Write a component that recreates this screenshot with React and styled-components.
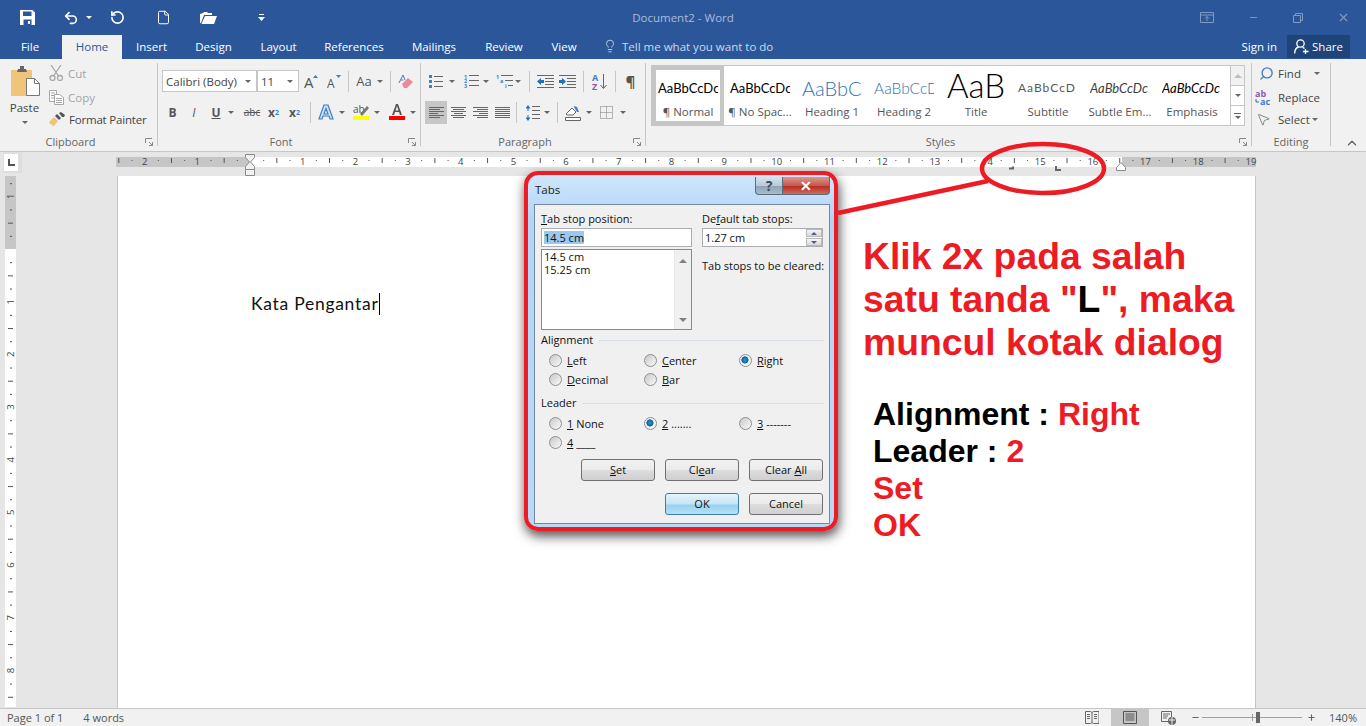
import React from 'react';
import styled, { createGlobalStyle } from 'styled-components';
import { Undo2, RotateCcw, File, Lightbulb, Search, MousePointer2, ChevronUp, Minus, X, Plus } from 'lucide-react';

const UI = '"Open Sans", "Noto Sans", sans-serif';
const RED = '#ed1c24';

const Global = createGlobalStyle`
	html, body { margin: 0; height: 100%; overflow: hidden; }
	#root { height: 726px; }
	* { box-sizing: border-box; }
	body { font-family: ${UI}; color: #444; }
`;

const Screen = styled.div`
	position: relative;
	width: 1366px;
	height: 726px;
	display: flex;
	flex-direction: column;
	overflow: hidden;
	background: #e6e6e6;
`;

/* title bar */
const TitleBar = styled.div`
	height: 35px;
	background: #2b579a;
	display: flex;
	align-items: center;
	color: #fff;
	padding-left: 20px;
`;
const QatSlot = styled.div`
	width: ${p => p.$w}px;
	display: flex;
	align-items: center;
`;
const DocTitle = styled.div`
	flex: 1;
	text-align: center;
	font-size: 11.5px;
	color: #a9bcd9;
	margin-left: -104px;
`;
const WinButtons = styled.div`
	display: flex;
	align-items: center;
	gap: 34px;
	padding-right: 16px;
	color: #7f9ac3;
`;

/* tabs */
const TabRow = styled.div`
	height: 24px;
	background: #2b579a;
	display: flex;
	align-items: stretch;
	padding-left: 7px;
	font-size: 11.5px;
	color: #fff;
`;
const Tab = styled.div`
	width: ${p => p.$w}px;
	display: flex;
	align-items: center;
	justify-content: center;
	padding: 0 ${p => p.$pr || 0}px 2px 0;
	background: ${p => (p.$active ? '#f1f1f1' : 'transparent')};
	color: ${p => (p.$active ? '#2b579a' : '#fff')};
`;
const TellMe = styled.div`
	display: flex;
	align-items: center;
	gap: 5px;
	margin-left: 12px;
	padding-bottom: 2px;
	color: #cdd9ea;
	flex: 1;
`;
const SignIn = styled.div`
	display: flex;
	align-items: center;
	margin-right: 10px;
	padding-bottom: 2px;
`;
const Share = styled.div`
	width: 63px;
	height: 23px;
	margin-right: 16px;
	padding-bottom: 1px;
	background: #1e4479;
	display: flex;
	align-items: center;
	justify-content: center;
	gap: 3px;
`;

/* ribbon */
const Ribbon = styled.div`
	height: 93px;
	background: #f1f1f1;
	border-bottom: 1px solid #c6c6c6;
	display: flex;
	font-size: 11.5px;
	color: #444;
`;
const Group = styled.div`
	width: ${p => p.$w}px;
	margin: 4px 0 5px;
	border-right: 1px solid #c6c6c6;
	display: flex;
	flex-direction: column;
`;
const GroupBody = styled.div`
	flex: 1;
	display: flex;
	padding-left: ${p => p.$pl || 0}px;
	min-height: 0;
`;
const GroupFoot = styled.div`
	height: 8px;
	display: grid;
	grid-template-columns: 1fr auto;
	align-items: center;
	line-height: 8px;
	text-align: center;
	font-size: 11px;
	color: #666;
`;
const Launcher = styled.svg`
	width: 8px;
	height: 8px;
	margin: 0 4px;
`;
const PasteBlock = styled.div`
	width: 49px;
	display: flex;
	flex-direction: column;
	align-items: center;
	padding-top: 3px;
	font-size: 11.5px;
`;
const PasteArt = styled.div`
	margin-left: 3px;
	height: 32px;
`;
const PasteLabel = styled.div`
	margin-top: 2px;
`;
const ClipList = styled.div`
	display: flex;
	flex-direction: column;
	margin-top: -2px;
`;
const ClipRow = styled.div`
	height: ${p => p.$h || 24}px;
	display: flex;
	align-items: center;
	gap: 4px;
	white-space: nowrap;
	letter-spacing: ${p => p.$ls || 0}px;
	color: ${p => (p.$dim ? '#a3a3a3' : '#444')};
`;
const Stack = styled.div`
	display: flex;
	flex-direction: column;
	padding-top: 7px;
	gap: ${p => p.$gap || 9}px;
`;
const Row = styled.div`
	height: ${p => p.$h || 22}px;
	display: flex;
	align-items: center;
`;
const Combo = styled.div`
	width: ${p => p.$w}px;
	height: 22px;
	background: #fff;
	border: 1px solid #c6c6c6;
	display: flex;
	align-items: center;
	justify-content: space-between;
	padding: 0 5px 0 3px;
	font-size: 11.5px;
`;
const Tool = styled.div`
	width: ${p => p.$w || 22}px;
	height: ${p => p.$h || 22}px;
	flex: none;
	display: flex;
	align-items: center;
	justify-content: center;
	background: ${p => (p.$on ? '#c6c6c6' : 'transparent')};
	font-size: ${p => p.$fs || 12}px;
	font-weight: ${p => (p.$bold ? 700 : 400)};
	font-style: ${p => (p.$italic ? 'italic' : 'normal')};
	text-decoration: ${p => p.$deco || 'none'};
	color: #555;
`;
const Sub = styled.sub`
	font-size: 7px;
	color: #3f7fc4;
`;
const Sup = styled.sup`
	font-size: 7px;
	color: #3f7fc4;
`;
const Gap = styled.span`
	width: ${p => p.$w}px;
	flex: none;
`;
const Sep = styled.div`
	width: 1px;
	height: 21px;
	flex: none;
	background: #c6c6c6;
	margin: 0 ${p => p.$mr ?? 6}px 0 ${p => p.$ml ?? 6}px;
`;
const Caret = styled.i`
	width: 0;
	height: 0;
	flex: none;
	border-left: 3px solid transparent;
	border-right: 3px solid transparent;
	border-top: 3px solid ${p => p.$c || '#666'};
	margin: ${p => p.$m || '0'};
`;
const Gallery = styled.div`
	margin: 2px 0 0 5px;
	width: 594px;
	height: 61px;
	background: #fff;
	border: 1px solid #c6c6c6;
	display: flex;
`;
const StyleItem = styled.div`
	width: 72px;
	flex: none;
	display: flex;
	flex-direction: column;
	align-items: center;
	justify-content: flex-end;
	border: ${p => (p.$on ? '4px solid #c6c6c6' : '4px solid transparent')};
	overflow: hidden;
`;
const Preview = styled.div`
	width: 60px;
	height: 32px;
	line-height: ${p => (p.$title ? 26 : 32)}px;
	overflow: hidden;
	white-space: nowrap;
	text-align: ${p => (p.$title ? 'center' : 'left')};
	font-family: Lato, "Liberation Sans", sans-serif;
	font-size: ${p => p.$fs || 13}px;
	font-weight: ${p => p.$fw || 400};
	font-style: ${p => (p.$italic ? 'italic' : 'normal')};
	letter-spacing: ${p => p.$ls || 0}px;
	color: ${p => p.$c || '#000'};
`;
const StyleName = styled.div`
	height: 17px;
	line-height: 16px;
	font-size: 11.5px;
	white-space: nowrap;
	color: #555;
`;
const GalleryScroll = styled.div`
	width: 14px;
	margin-left: auto;
	display: flex;
	flex-direction: column;
	border-left: 1px solid #c6c6c6;
`;
const ScrollCell = styled.div`
	flex: 1;
	display: flex;
	flex-direction: column;
	align-items: center;
	justify-content: center;
	gap: 2px;
	background: ${p => (p.$off ? '#f1f1f1' : '#fff')};
	border-bottom: ${p => (p.$end ? 'none' : '1px solid #c6c6c6')};
`;
const UpMark = styled.i`
	width: 0;
	height: 0;
	border-left: 4px solid transparent;
	border-right: 4px solid transparent;
	border-bottom: 4px solid #c0c0c0;
`;
const Bar = styled.i`
	width: 7px;
	height: 1px;
	background: #666;
`;
const EditList = styled.div`
	display: flex;
	flex-direction: column;
	margin-top: -2px;
`;
const EditRow = styled.div`
	height: ${p => p.$h || 24}px;
	display: flex;
	align-items: center;
`;
const EditIcon = styled.div`
	width: 26px;
	display: flex;
	justify-content: center;
	padding-left: ${p => p.$pl || 0}px;
	padding-right: ${p => p.$pr ?? 3}px;
`;
const Collapse = styled.div`
	flex: 1;
	display: flex;
	align-items: flex-end;
	justify-content: center;
	padding: 0 0 1px 6px;
	color: #666;
`;

/* ruler + document */
const RulerRow = styled.div`
	height: 24px;
	flex: none;
	display: flex;
	background: #e6e6e6;
`;
const SelectorWell = styled.div`
	width: 19px;
	height: 21px;
	margin: 0 94px 0 3px;
	background: #dedede;
	padding: 2px 4px 2px 1px;
`;
const TabSelector = styled.div`
	width: 14px;
	height: 17px;
	background: #fff;
	display: flex;
	align-items: center;
	justify-content: center;
`;
const WorkArea = styled.div`
	flex: 1;
	display: flex;
	min-height: 0;
`;
const Gutter = styled.div`
	width: 117px;
	flex: none;
	padding-left: 5px;
`;
const Page = styled.div`
	width: 1139px;
	flex: none;
	background: #fff;
	border-left: 1px solid #c6c6c6;
	border-right: 1px solid #c6c6c6;
	padding: 116px 0 0 133px;
`;
const BodyText = styled.div`
	font-family: Lato, "Liberation Sans", sans-serif;
	font-size: 17.5px;
	line-height: 24px;
	letter-spacing: 0.72px;
	color: #111;
	display: flex;
	align-items: center;
`;
const Cursor = styled.i`
	width: 1px;
	height: 22px;
	background: #000;
`;

/* status */
const StatusBar = styled.div`
	height: 18px;
	flex: none;
	background: #f1f1f1;
	border-top: 1px solid #c6c6c6;
	display: flex;
	align-items: center;
	font-size: 11px;
	color: #555;
	padding: 0 9px 0 7px;
	white-space: nowrap;
`;
const StatusText = styled.span`
	margin: ${p => p.$m || '0'};
`;
const StatusRight = styled.div`
	margin-left: auto;
	display: flex;
	align-items: center;
`;
const ViewButton = styled.div`
	width: ${p => p.$w}px;
	height: 17px;
	display: flex;
	align-items: center;
	justify-content: center;
	background: ${p => (p.$on ? '#c6c6c6' : 'transparent')};
`;
const ZoomEnd = styled.div`
	display: flex;
	margin: ${p => p.$m};
	color: #666;
`;
const Zoomer = styled.div`
	position: relative;
	width: 100px;
	height: 1px;
	background: #a0a0a0;
	margin: 0 5px 0 2px;
	display: flex;
	justify-content: center;
	align-items: center;
	&::before {
		content: '';
		position: absolute;
		left: 50px;
		top: -3px;
		width: 1px;
		height: 7px;
		background: #a0a0a0;
	}
`;
const ZoomThumb = styled.i`
	width: 4px;
	height: 11px;
	background: #666;
	flex: none;
	margin-left: 12px;
`;

/* Tabs dialog */
const Dialog = styled.div`
	position: absolute;
	left: 524px;
	top: 171px;
	width: 314px;
	height: 360px;
	border: 4px solid ${RED};
	border-radius: 14px;
	background: linear-gradient(180deg, #cfe6fb 0%, #b4d6f6 12%, #b9d9f7 100%);
	box-shadow: 1px 5px 12px rgba(0, 0, 0, 0.7);
	padding: 0 4px 3px 6px;
	display: flex;
	flex-direction: column;
	font-size: 11px;
	color: #111;
`;
const DialogHead = styled.div`
	height: 29px;
	flex: none;
	font-size: 11.5px;
	padding: 7px 0 0 1px;
	color: #1a1a1a;
`;
const Caption = styled.div`
	position: absolute;
	top: 2px;
	right: 4px;
	display: flex;
`;
const CapButton = styled.div`
	width: ${p => p.$w}px;
	height: 18px;
	display: flex;
	align-items: center;
	justify-content: center;
	border: 1px solid #5d6b7a;
	border-top: none;
	border-left: ${p => (p.$close ? 'none' : '1px solid #5d6b7a')};
	border-radius: ${p => (p.$close ? '0 0 4px 0' : '0 0 0 4px')};
	background: ${p => (p.$close
		? 'linear-gradient(180deg, #d9978e 0%, #c8574d 50%, #b92d21 55%, #cc6a5f 100%)'
		: 'linear-gradient(180deg, #d5e3f0 0%, #b8cadb 50%, #8fa4b8 55%, #a9bccd 100%)')};
	color: ${p => (p.$close ? '#fff' : '#3a4a5a')};
	font-size: 14px;
	font-weight: 700;
`;
const DialogPanel = styled.div`
	flex: 1;
	background: #f0f0f0;
	border: 1px solid #76899c;
	padding: 7px 6px 0 6px;
	display: flex;
	flex-direction: column;
`;
const TopGrid = styled.div`
	display: grid;
	grid-template-columns: 151px 121px;
	column-gap: 10px;
`;
const Col = styled.div`
	display: flex;
	flex-direction: column;
`;
const FieldLabel = styled.div`
	height: 14px;
	line-height: 14px;
	margin-bottom: 2px;
	white-space: nowrap;
`;
const Field = styled.div`
	height: 19px;
	background: #fff;
	border: 1px solid #abadb3;
	display: flex;
	align-items: center;
	padding-left: 2px;
	justify-content: space-between;
`;
const Selected = styled.span`
	background: #99c9ef;
	line-height: 13px;
`;
const Spin = styled.div`
	width: 16px;
	height: 17px;
	display: flex;
	flex-direction: column;
	gap: 1px;
`;
const SpinPart = styled.div`
	flex: 1;
	background: linear-gradient(180deg, #f5f5f5, #d9d9d9);
	border: 1px solid #b9b9b9;
	display: flex;
	align-items: center;
	justify-content: center;
`;
const SpinArrow = styled.i`
	width: 0;
	height: 0;
	border-left: 3px solid transparent;
	border-right: 3px solid transparent;
	${p => (p.$down ? 'border-top: 3px solid #4a5f8c;' : 'border-bottom: 3px solid #4a5f8c;')}
`;
const ListBox = styled.div`
	height: 81px;
	margin-top: 2px;
	background: #fff;
	border: 1px solid #8a8a8a;
	display: flex;
`;
const ListItems = styled.div`
	flex: 1;
	padding: 0 0 0 2px;
	line-height: 13px;
`;
const ListScroll = styled.div`
	width: 17px;
	background: #f0f0f0;
	border-left: 1px solid #e6e6e6;
	display: flex;
	flex-direction: column;
	justify-content: space-between;
	align-items: center;
	padding: 9px 0 7px;
`;
const ListArrow = styled.i`
	width: 0;
	height: 0;
	border-left: 4px solid transparent;
	border-right: 4px solid transparent;
	${p => (p.$down ? 'border-top: 4px solid #808080;' : 'border-bottom: 4px solid #808080;')}
`;
const Hint = styled.div`
	margin-top: 11px;
	white-space: nowrap;
`;
const SectionHead = styled.div`
	height: 14px;
	line-height: 14px;
	margin-top: ${p => p.$mt}px;
	display: flex;
	align-items: center;
	gap: 6px;
	width: 283px;
	&::after {
		content: '';
		flex: 1;
		height: 1px;
		background: #d6dfe8;
	}
`;
const RadioGrid = styled.div`
	display: grid;
	grid-template-columns: 95px 95px 90px;
	grid-auto-rows: 19px;
	padding-left: 8px;
	margin-top: 4px;
`;
const RadioCell = styled.div`
	display: flex;
	align-items: center;
	gap: 5px;
	white-space: nowrap;
	line-height: 17px;
	padding-bottom: 1px;
`;
const RadioDot = styled.i`
	width: 13px;
	height: 13px;
	flex: none;
	border-radius: 50%;
	border: 1px solid #8e8f8f;
	background: ${p => (p.$on
		? 'radial-gradient(circle at 45% 45%, #2f9bd8 0%, #0e5f96 38%, #f0f0f0 45%, #fff 100%)'
		: 'linear-gradient(135deg, #c8c8c8, #fafafa)')};
`;
const ButtonRow = styled.div`
	display: flex;
	justify-content: flex-end;
	gap: 10px;
	margin-top: ${p => p.$mt}px;
`;
const DlgButton = styled.div`
	width: 74px;
	height: 22px;
	display: flex;
	align-items: center;
	justify-content: center;
	padding-bottom: 1px;
	border-radius: 3px;
	border: 1px solid ${p => (p.$primary ? '#3c7fb1' : '#707070')};
	background: ${p => (p.$primary
		? 'linear-gradient(180deg, #e5f4fc 0%, #c4e5f6 50%, #98d1ef 55%, #b6e0f5 100%)'
		: 'linear-gradient(180deg, #f2f2f2 0%, #ebebeb 50%, #dddddd 52%, #cfcfcf 100%)')};
`;

/* annotation over the page */
const Callout = styled.svg`
	position: absolute;
	left: 0;
	top: 0;
	pointer-events: none;
`;
const Note = styled.div`
	position: absolute;
	left: ${p => p.$x}px;
	top: ${p => p.$y}px;
	font-family: "Liberation Sans", Arial, sans-serif;
	font-weight: 700;
	white-space: nowrap;
	font-size: ${p => p.$fs}px;
	line-height: ${p => p.$lh}px;
	color: ${RED};
`;
const Black = styled.span`
	color: #000;
`;
const U = styled.u`
	text-underline-offset: 1px;
`;

/* drawings */
const SaveIcon = () => (
	<svg width="15" height="15" viewBox="0 0 15 15"><path fillRule="evenodd" fill="#fff" d="M0 0h12.5L15 2.5V15H0zM3 1.5V6h8.5V1.5zM3.5 9.5V15h8V9.5zM8 11h2v3H8z" /></svg>
);
const OpenIcon = () => (
	<svg width="17" height="14" viewBox="0 0 17 14"><path fill="#fff" d="M0 3l3-1 1-1h3l1 1h4v2H4L1 12H0zM5 5h12l-3 8H1.500z" /></svg>
);
const QatMore = () => (
	<svg width="7" height="8" viewBox="0 0 7 8"><path fill="#fff" d="M1 0h5v1H1zM0 3h7L3.500 7z" /></svg>
);
const RibbonDisplay = () => (
	<svg width="14" height="11" viewBox="0 0 14 11" fill="none" stroke="currentColor"><path d="M.5.500h13v10H.5zM.5 3h13M7 9V4.500M5 6.500l2-2 2 2" /></svg>
);
const Restore = () => (
	<svg width="10" height="10" viewBox="0 0 10 10" fill="none" stroke="currentColor"><path d="M.5 2.500h7v7h-7zM2.500 2.500v-2h7v7h-2" /></svg>
);
const ShareIcon = () => (
	<svg width="15" height="15" viewBox="0 0 15 15" fill="none" stroke="#fff" strokeWidth="1.300"><circle cx="6.500" cy="4.500" r="3.700" /><path d="M.7 14.500c0-3.500 2-6 4-6.500M8.500 8.300c.8.200 1.500.6 2 1.200M11.500 10v5M9 12.500h5.500" /></svg>
);
const PasteIcon = () => (
	<svg width="30" height="32" viewBox="0 0 30 32">
		<path fill="#eec579" d="M0 4h21v26H0z" />
		<path fill="#666" d="M7 3h2V0h4v3h2l1 3H6z" />
		<path fill="#fff" stroke="#777" d="M15.500 12.500h8l5 5v12h-13z" />
		<path fill="none" stroke="#777" d="M23.500 12.500v5h5" />
	</svg>
);
const CutIcon = () => (
	<svg width="15" height="16" viewBox="0 0 15 16" fill="none" stroke="#a8a8a8" strokeWidth="1.300"><path d="M2 0l7.500 11M12 0L4.500 11" /><circle cx="3.500" cy="13" r="2.500" /><circle cx="11" cy="13" r="2.500" /></svg>
);
const CopyIcon = () => (
	<svg width="15" height="15" viewBox="0 0 15 15" fill="#fff" stroke="#a8a8a8"><path d="M.5.500h7v11h-7zM2 3h4M2 5.500h4M2 8h4" /><path d="M5.500 4.500h5l4 3v7h-9zM7 8.500h6M7 10.500h6M7 12.500h6" /></svg>
);
const PainterIcon = () => (
	<svg width="16" height="14" viewBox="0 0 16 14"><path fill="#eec579" d="M0 10l5-5 4 4-4 5H3l1-2-2 1z" /><path fill="#555" d="M6 4l4 4 2-2-4-4zM10 1l2-1 4 3-1 2-2 0z" /></svg>
);
const GrowFont = ({ down }) => (
	<svg width="14" height="15" viewBox="0 0 14 15">
		<text x="0" y="14" fontSize={down ? 12 : 15} fontFamily="Open Sans" fill="#555">A</text>
		<path fill="#3f7fc4" d={down ? 'M9 1h5l-2.500 3z' : 'M9 4h5l-2.500-3z'} />
	</svg>
);
const Eraser = () => (
	<svg width="16" height="15" viewBox="0 0 16 15">
		<path fill="#e98a9a" d="M4 10l6-6 5 4-6 6H6z" />
		<path fill="none" stroke="#3f7fc4" d="M1 9L5 1l2 5" />
		<path fill="none" stroke="#b4648c" d="M2.500 6h3" />
	</svg>
);
const TextEffect = () => (
	<svg width="16" height="16" viewBox="0 0 16 16"><path fill="#cfe2f5" stroke="#3f7fc4" strokeWidth="1.200" d="M6 1h4l5 14h-3l-1-3H5l-1 3H1zM8 4.500L6 10h4z" /></svg>
);
const Highlight = () => (
	<svg width="16" height="16" viewBox="0 0 16 16">
		<text x="0" y="9" fontSize="10" fontFamily="Open Sans" fill="#555">ab</text>
		<path fill="#777" d="M7 10l7-8 2 2-7 8z" />
		<path fill="#ffff00" d="M0 12h16v4H0z" />
	</svg>
);
const FontColor = () => (
	<svg width="16" height="16" viewBox="0 0 16 16">
		<path fill="#555" d="M7 0h2l4 11h-2l-1-3H6l-1 3H3zM8 2L6.500 6.500h3z" />
		<path fill="#f00" d="M0 12h16v4H0z" />
	</svg>
);
const BulletIcon = () => (
	<svg width="14" height="13" viewBox="0 0 14 13"><path fill="#3f7fc4" d="M0 0h3v3H0zM0 5h3v3H0zM0 10h3v3H0z" /><path fill="#666" d="M5 1h9v1H5zM5 6h9v1H5zM5 11h9v1H5z" /></svg>
);
const NumberIcon = () => (
	<svg width="15" height="14" viewBox="0 0 15 14"><text fontSize="5.500" fontWeight="700" fontFamily="Open Sans" fill="#3f7fc4"><tspan x="0" y="4.500">1</tspan><tspan x="0" y="9">2</tspan><tspan x="0" y="13.500">3</tspan></text><path fill="#666" d="M5 1h10v1H5zM5 6h10v1H5zM5 11h10v1H5z" /></svg>
);
const MultiIcon = () => (
	<svg width="17" height="14" viewBox="0 0 17 14"><text fontSize="5.500" fontWeight="700" fontFamily="Open Sans" fill="#3f7fc4"><tspan x="0" y="4.500">1</tspan><tspan x="4" y="9">a</tspan><tspan x="9" y="13.500">i</tspan></text><path fill="#666" d="M5 1h12v1H5zM9 6h8v1H9zM12 11h5v1h-5z" /></svg>
);
const IndentIcon = ({ more }) => (
	<svg width="17" height="13" viewBox="0 0 17 13"><path fill="#666" d="M0 0h17v1H0zM8 3h9v1H8zM8 6h9v1H8zM8 9h9v1H8zM0 12h17v1H0z" /><path fill="#1f6fbf" d={more ? 'M0 5h3V3l4 3.500L3 10V8H0z' : 'M7 5H4V3L0 6.500 4 10V8h3z'} /></svg>
);
const SortIcon = () => (
	<svg width="15" height="17" viewBox="0 0 15 17">
		<text x="0" y="8" fontSize="9" fontWeight="700" fontFamily="Open Sans" fill="#3f7fc4">A</text>
		<text x="0" y="16.500" fontSize="9" fontWeight="700" fontFamily="Open Sans" fill="#8d5bb0">Z</text>
		<path fill="none" stroke="#666" d="M11.500 1v14M8.500 12l3 3.500 3-3.500" />
	</svg>
);
const AlignIcon = ({ rows }) => (
	<svg width="15" height="11" viewBox="0 0 15 11">
		{rows.map((r, i) => <rect key={i} x={r[0]} y={i * 2} width={r[1]} height="1" fill="#666" />)}
	</svg>
);
const SpacingIcon = () => (
	<svg width="14" height="16" viewBox="0 0 14 16"><path fill="#1f6fbf" d="M2 0l2.500 3.500h-2V6h-1V3.500h-2zM1.500 10h1v2.500h2L2 16l-2.500-3.500h2z" /><path fill="#666" d="M6 1h8v1H6zM6 5h8v1H6zM6 9h8v1H6zM6 13h8v1H6z" /></svg>
);
const ShadingIcon = () => (
	<svg width="16" height="16" viewBox="0 0 16 16"><path fill="#fff" stroke="#666" d="M1 9l6-6 4 4-3 3H2zM.5 12.500h15v3H.5z" /><path fill="#3f7fc4" d="M9 1l3 1 2 5-2 0-3-5z" /></svg>
);
const BordersIcon = () => (
	<svg width="13" height="13" viewBox="0 0 13 13" fill="none" stroke="#777" strokeDasharray="1 1"><path d="M.5.500h12v12H.5zM6.500.5v12M.5 6.500h12" /></svg>
);
const ReplaceIcon = () => (
	<svg width="17" height="17" viewBox="0 0 17 17">
		<text x="0" y="7.500" fontSize="9" fontWeight="700" fontFamily="Open Sans" fill="#8d5bb0">ab</text>
		<text x="5" y="16" fontSize="9" fontWeight="700" fontFamily="Open Sans" fill="#3f7fc4">ac</text>
		<path fill="none" stroke="#1f6fbf" d="M1 10v3h3" />
	</svg>
);
const ReadIcon = () => (
	<svg width="14" height="13" viewBox="0 0 14 13" fill="none" stroke="#666"><path d="M.5.500h5l1.500 1 1.500-1h5.500v12h-5.500l-1.500-1-1.500 1h-5zM7 1.500v10M2 3.500h3M2 5.500h3M2 7.500h3M9 3.500h3M9 5.500h3M9 7.500h3" /></svg>
);
const PrintIcon = () => (
	<svg width="14" height="13" viewBox="0 0 14 13" fill="none" stroke="#555"><path d="M.5.500h13v12H.5zM2.500 3h9M2.500 5h9M2.500 7h9M2.500 9h9" /></svg>
);
const WebIcon = () => (
	<svg width="15" height="14" viewBox="0 0 15 14"><path fill="none" stroke="#666" d="M.5.500h10v10H.5zM2 3h7M2 5h5M2 7h4" /><circle cx="11" cy="10" r="4" fill="#666" /><path stroke="#f1f1f1" fill="none" d="M8 9h6M11 6v8" /></svg>
);

const rulerQuarter = 13.17;

// horizontal ruler, x = 0 is the left end of the drawing (screen x 116)
const HorizontalRuler = () => {
	const zero = 134;
	const marks = [];
	for (let q = -10; q <= 76; q++) {
		if (q === 0) continue;
		const x = zero + q * rulerQuarter;
		if (q % 4 === 0) {
			marks.push(<text key={q} x={x} y="12.500" fontSize="9.500" textAnchor="middle" fontFamily={UI} fill="#444">{Math.abs(q / 4)}</text>);
		} else if (q % 2 === 0) {
			marks.push(<rect key={q} x={x} y="6" width="1" height="5" fill="#555" />);
		} else {
			marks.push(<rect key={q} x={x} y="8" width="1" height="1" fill="#555" />);
		}
	}
	return (
		<svg width="1150" height="24" viewBox="0 0 1150 24">
			<rect x="0" y="5" width="134" height="10" fill="#c6c6c6" />
			<rect x="134" y="5" width="872" height="10" fill="#fff" />
			<rect x="1006" y="5" width="134" height="10" fill="#c6c6c6" />
			{marks}
			<path d="M129.500 2.500h9v3l-4 4.500 4 4.500v3h-9v-3l4-4.500-4-4.500z" fill="#f1f1f1" stroke="#8a8a8a" />
			<path d="M129.500 17.500h9v6h-9z" fill="#f1f1f1" stroke="#8a8a8a" />
			<path d="M1000.500 18.500v-3l4.500-5 4.500 5v3z" fill="#fff" stroke="#8a8a8a" />
			<path d="M896 14.500h2v3h-5v-2h3z" fill="#666" />
			<path d="M939 14h2v3h4v2h-6z" fill="#666" />
		</svg>
	);
};

const VerticalRuler = () => {
	const zero = 73;
	const marks = [];
	for (let q = -5; q <= 35; q++) {
		if (q === 0) continue;
		const y = zero + q * rulerQuarter;
		if (q % 4 === 0) {
			marks.push(<text key={q} transform={`translate(8.500 ${y}) rotate(-90)`} fontSize="9.500" textAnchor="middle" fontFamily={UI} fill="#444">{Math.abs(q / 4)}</text>);
		} else if (q % 2 === 0) {
			marks.push(<rect key={q} x="3" y={y} width="5" height="1" fill="#555" />);
		} else {
			marks.push(<rect key={q} x="5" y={y} width="2" height="1" fill="#555" />);
		}
	}
	return (
		<svg width="11" height="531" viewBox="0 0 11 531">
			<rect width="11" height="73" fill="#c6c6c6" />
			<rect y="73" width="11" height="458" fill="#fff" />
			{marks}
		</svg>
	);
};

const Corner = () => (
	<Launcher viewBox="0 0 8 8"><path fill="none" stroke="#888" d="M.5 5V.5H7M4 4l3.500 3.500M4 7.500h3.500V4" /></Launcher>
);

const styleItems = [
	{ name: '¶ Normal', on: true },
	{ name: '¶ No Spac...' },
	{ name: 'Heading 1', fs: 20, c: '#2e74b5', fw: 300, prev: 'AaBbCc' },
	{ name: 'Heading 2', fs: 15.500, c: '#2e74b5', fw: 300, prev: 'AaBbCcD' },
	{ name: 'Title', fs: 33, fw: 300, prev: 'AaB', title: true },
	{ name: 'Subtitle', fs: 12, c: '#595959', ls: 1, prev: 'AaBbCcD' },
	{ name: 'Subtle Em...', c: '#404040', italic: true },
	{ name: 'Emphasis', italic: true },
];

const App = () => (
	<>
		<Global />
		<Screen>
			<TitleBar>
				<QatSlot $w={43}><SaveIcon /></QatSlot>
				<QatSlot $w={47}><Undo2 size={16} strokeWidth={2.4} /><Caret $c="#fff" $m="0 0 0 7px" /></QatSlot>
				<QatSlot $w={46}><RotateCcw size={15} strokeWidth={2.6} /></QatSlot>
				<QatSlot $w={44}><File size={15} strokeWidth={1.6} /></QatSlot>
				<QatSlot $w={58}><OpenIcon /></QatSlot>
				<QatSlot $w={12}><QatMore /></QatSlot>
				<DocTitle>Document2 - Word</DocTitle>
				<WinButtons>
					<RibbonDisplay />
					<Minus size={11} />
					<Restore />
					<X size={13} />
				</WinButtons>
			</TitleBar>
			<TabRow>
				<Tab $w={55} $pr={9}>File</Tab>
				<Tab $w={60} $active>Home</Tab>
				<Tab $w={59}>Insert</Tab>
				<Tab $w={65}>Design</Tab>
				<Tab $w={65}>Layout</Tab>
				<Tab $w={86}>References</Tab>
				<Tab $w={74}>Mailings</Tab>
				<Tab $w={66}>Review</Tab>
				<Tab $w={54}>View</Tab>
				<TellMe><Lightbulb size={14} strokeWidth={1.5} />Tell me what you want to do</TellMe>
				<SignIn>Sign in</SignIn>
				<Share><ShareIcon />Share</Share>
			</TabRow>
			<Ribbon>
				<Group $w={158}>
					<GroupBody>
						<PasteBlock>
							<PasteArt><PasteIcon /></PasteArt>
							<PasteLabel>Paste</PasteLabel>
							<Caret $m="6px 0 0" />
						</PasteBlock>
						<ClipList>
							<ClipRow $dim><CutIcon />Cut</ClipRow>
							<ClipRow $dim><CopyIcon />Copy</ClipRow>
							<ClipRow $h={20} $ls={-0.2}><PainterIcon />Format Painter</ClipRow>
						</ClipList>
					</GroupBody>
					<GroupFoot><span>Clipboard</span><Corner /></GroupFoot>
				</Group>
				<Group $w={263}>
					<GroupBody $pl={4}>
						<Stack>
							<Row>
								<Combo $w={95}>Calibri (Body)<Caret /></Combo>
								<Combo $w={42}>11<Caret /></Combo>
								<Tool $w={24}><GrowFont /></Tool>
								<Tool $w={22}><GrowFont down /></Tool>
								<Sep $ml={3} $mr={7} />
								<Tool $w={16} $fs={13}>Aa</Tool>
								<Caret $m="0 0 0 5px" />
								<Sep $ml={7} $mr={7} />
								<Eraser />
							</Row>
							<Row>
								<Tool $w={21} $bold>B</Tool>
								<Tool $w={22} $italic>I</Tool>
								<Tool $w={22} $bold $deco="underline">U</Tool>
								<Caret $m="0 7px 0 1px" />
								<Tool $w={22} $fs={10} $deco="line-through">abc</Tool>
								<Tool $w={21} $bold>x<Sub>2</Sub></Tool>
								<Tool $w={21} $bold>x<Sup>2</Sup></Tool>
								<Sep $ml={5} $mr={7} />
								<TextEffect />
								<Caret $m="0 8px 0 5px" />
								<Highlight />
								<Caret $m="0 9px 0 5px" />
								<FontColor />
								<Caret $m="0 0 0 5px" />
							</Row>
						</Stack>
					</GroupBody>
					<GroupFoot><span>Font</span><Corner /></GroupFoot>
				</Group>
				<Group $w={225}>
					<GroupBody $pl={4}>
						<Stack>
							<Row>
								<Tool $w={22}><BulletIcon /></Tool>
								<Caret $m="0 8px 0 2px" />
								<Tool $w={16}><NumberIcon /></Tool>
								<Caret $m="0 7px 0 4px" />
								<MultiIcon />
								<Caret $m="0 0 0 2px" />
								<Sep $ml={8} $mr={7} />
								<IndentIcon />
								<Gap $w={5} />
								<IndentIcon more />
								<Sep $ml={7} $mr={8} />
								<SortIcon />
								<Sep $ml={8} $mr={8} />
								<Tool $w={13} $fs={15} $bold>¶</Tool>
							</Row>
							<Row $h={23}>
								<Tool $w={22} $h={23} $on><AlignIcon rows={[[0, 15], [0, 11], [0, 15], [0, 9], [0, 15], [0, 11]]} /></Tool>
								<Tool $w={22}><AlignIcon rows={[[0, 15], [2, 11], [0, 15], [3, 9], [0, 15], [2, 11]]} /></Tool>
								<Tool $w={22}><AlignIcon rows={[[0, 15], [4, 11], [0, 15], [6, 9], [0, 15], [4, 11]]} /></Tool>
								<Tool $w={22}><AlignIcon rows={[[0, 15], [0, 15], [0, 15], [0, 15], [0, 15], [0, 15]]} /></Tool>
								<Sep $ml={3} $mr={9} />
								<SpacingIcon />
								<Caret $m="0 0 0 4px" />
								<Sep $ml={7} $mr={7} />
								<ShadingIcon />
								<Caret $m="0 8px 0 5px" />
								<BordersIcon />
								<Caret $m="0 0 0 7px" />
							</Row>
						</Stack>
					</GroupBody>
					<GroupFoot><span>Paragraph</span><Corner /></GroupFoot>
				</Group>
				<Group $w={606}>
					<GroupBody>
						<Gallery>
							{styleItems.map(s => (
								<StyleItem key={s.name} $on={s.on}>
									<Preview $fs={s.fs} $c={s.c} $fw={s.fw} $italic={s.italic} $ls={s.ls} $title={s.title}>{s.prev || 'AaBbCcDc'}</Preview>
									<StyleName>{s.name}</StyleName>
								</StyleItem>
							))}
							<GalleryScroll>
								<ScrollCell $off><UpMark /></ScrollCell>
								<ScrollCell><Caret /></ScrollCell>
								<ScrollCell $end><Bar /><Caret /></ScrollCell>
							</GalleryScroll>
						</Gallery>
					</GroupBody>
					<GroupFoot><span>Styles</span><Corner /></GroupFoot>
				</Group>
				<Group $w={79}>
					<GroupBody>
						<EditList>
							<EditRow><EditIcon $pl={3} $pr={0}><Search size={15} strokeWidth={2.2} color="#3f7fc4" style={{ transform: 'scaleX(-1)' }} /></EditIcon>Find<Caret $m="0 0 0 13px" /></EditRow>
							<EditRow><EditIcon><ReplaceIcon /></EditIcon>Replace</EditRow>
							<EditRow $h={20}><EditIcon><MousePointer2 size={15} strokeWidth={1.2} color="#666" /></EditIcon>Select<Caret $m="0 0 0 2px" /></EditRow>
						</EditList>
					</GroupBody>
					<GroupFoot><span>Editing</span></GroupFoot>
				</Group>
				<Collapse><ChevronUp size={14} strokeWidth={2.4} /></Collapse>
			</Ribbon>
			<RulerRow>
				<SelectorWell>
					<TabSelector>
						<svg width="7" height="7" viewBox="0 0 7 7"><path fill="#555" d="M0 0h2v5h5v2H0z" /></svg>
					</TabSelector>
				</SelectorWell>
				<HorizontalRuler />
			</RulerRow>
			<WorkArea>
				<Gutter><VerticalRuler /></Gutter>
				<Page>
					<BodyText>Kata Pengantar<Cursor /></BodyText>
				</Page>
			</WorkArea>
			<StatusBar>
				<StatusText $m="0 20px 0 0">Page 1 of 1</StatusText>
				<StatusText>4 words</StatusText>
				<StatusRight>
					<ViewButton $w={38}><ReadIcon /></ViewButton>
					<ViewButton $w={38} $on><PrintIcon /></ViewButton>
					<ViewButton $w={39}><WebIcon /></ViewButton>
					<ZoomEnd $m="0 0 0 3px"><Minus size={9} strokeWidth={3} /></ZoomEnd>
					<Zoomer><ZoomThumb /></Zoomer>
					<ZoomEnd $m="0"><Plus size={9} strokeWidth={3} /></ZoomEnd>
					<StatusText $m="0 0 0 13px">140%</StatusText>
				</StatusRight>
			</StatusBar>

			<Dialog>
				<DialogHead>Tabs</DialogHead>
				<Caption>
					<CapButton $w={28}>?</CapButton>
					<CapButton $w={47} $close>✕</CapButton>
				</Caption>
				<DialogPanel>
					<TopGrid>
						<Col>
							<FieldLabel><U>T</U>ab stop position:</FieldLabel>
							<Field><Selected>14.5 cm</Selected></Field>
							<ListBox>
								<ListItems>14.5 cm<br />15.25 cm</ListItems>
								<ListScroll><ListArrow /><ListArrow $down /></ListScroll>
							</ListBox>
						</Col>
						<Col>
							<FieldLabel>De<U>f</U>ault tab stops:</FieldLabel>
							<Field>1.27 cm<Spin><SpinPart><SpinArrow /></SpinPart><SpinPart><SpinArrow $down /></SpinPart></Spin></Field>
							<Hint>Tab stops to be cleared:</Hint>
						</Col>
					</TopGrid>
					<SectionHead $mt={3}>Alignment</SectionHead>
					<RadioGrid>
						<RadioCell><RadioDot /><span><U>L</U>eft</span></RadioCell>
						<RadioCell><RadioDot /><span><U>C</U>enter</span></RadioCell>
						<RadioCell><RadioDot $on /><span><U>R</U>ight</span></RadioCell>
						<RadioCell><RadioDot /><span><U>D</U>ecimal</span></RadioCell>
						<RadioCell><RadioDot /><span><U>B</U>ar</span></RadioCell>
					</RadioGrid>
					<SectionHead $mt={7}>Leader</SectionHead>
					<RadioGrid>
						<RadioCell><RadioDot /><span><U>1</U> None</span></RadioCell>
						<RadioCell><RadioDot $on /><span><U>2</U> .......</span></RadioCell>
						<RadioCell><RadioDot /><span><U>3</U> -------</span></RadioCell>
						<RadioCell><RadioDot /><span><U>4</U> ____</span></RadioCell>
					</RadioGrid>
					<ButtonRow $mt={7}>
						<DlgButton><span><U>S</U>et</span></DlgButton>
						<DlgButton><span>Cl<U>e</U>ar</span></DlgButton>
						<DlgButton><span>Clear <U>A</U>ll</span></DlgButton>
					</ButtonRow>
					<ButtonRow $mt={12}>
						<DlgButton $primary>OK</DlgButton>
						<DlgButton>Cancel</DlgButton>
					</ButtonRow>
				</DialogPanel>
			</Dialog>

			<Callout width="1366" height="726" viewBox="0 0 1366 726">
				<ellipse cx="1043" cy="168.500" rx="61" ry="24.500" fill="none" stroke={RED} strokeWidth="4.500" />
				<path d="M838 213L988 181" stroke={RED} strokeWidth="4.500" />
			</Callout>
			<Note $x={863} $y={235} $fs={37.300} $lh={43}>
				Klik 2x pada salah<br />
				satu tanda "<Black>L</Black>", maka<br />
				muncul kotak dialog
			</Note>
			<Note $x={873} $y={396} $fs={32} $lh={37}>
				<Black>Alignment : </Black>Right<br />
				<Black>Leader : </Black>2<br />
				Set<br />
				OK
			</Note>
		</Screen>
	</>
);

export default App;
